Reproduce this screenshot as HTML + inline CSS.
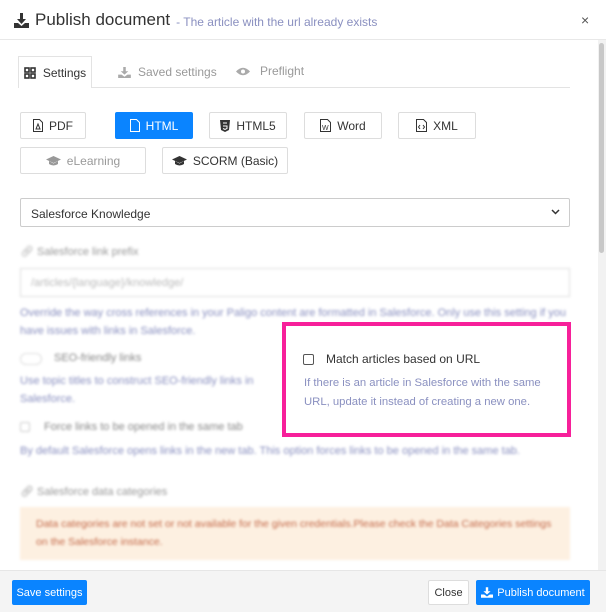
<!DOCTYPE html>
<html><head><meta charset="utf-8"><style>
*{box-sizing:border-box;margin:0;padding:0}
body{width:606px;height:612px;overflow:hidden;background:#fff;font-family:"Liberation Sans",sans-serif;position:relative;color:#333}
.a{position:absolute}
.btn{position:absolute;border:1px solid #ddd;border-radius:2px;background:#fff;font-size:12px;color:#333;display:flex;align-items:center;justify-content:center;gap:6px;height:27px}
.blur{filter:blur(1.3px)}
.desc{color:#8a90c0;font-size:12px;line-height:18px}
</style></head><body>
<div class="a" style="left:14px;top:10px;font-size:17px;color:#333;display:flex;align-items:center;gap:6px">
<svg width="15" height="15" viewBox="0 0 15 15"><path d="M6 0h3v6h3l-4.5 5L3 6h3z M0 10h4l3.5 3 3.5-3h4v5H0z" fill="#333"/></svg>
<span>Publish document</span><span style="font-size:12px;color:#8a90c0;margin-top:3px">- The article with the url already exists</span></div>
<div class="a" style="left:581px;top:12px;font-size:14px;color:#555">×</div>
<div class="a" style="left:0;top:39px;width:606px;height:1px;background:#e8e8e8"></div>
<div class="a" style="left:598px;top:40px;width:8px;height:530px;background:#f2f2f2"></div>
<div class="a" style="left:599px;top:43px;width:5px;height:210px;background:#c8c8c8;border-radius:3px"></div>
<div class="a" style="left:18px;top:87px;width:552px;height:1px;background:#e3e3e3"></div>
<div class="a" style="left:18px;top:56px;width:74px;height:32px;border:1px solid #e3e3e3;border-bottom:none;background:#fff;font-size:12px;display:flex;align-items:center;justify-content:center;gap:7px">
<svg width="12" height="12" viewBox="0 0 12 12" fill="none" stroke="#333" stroke-width="1.6"><rect x="1" y="1" width="4" height="4"/><rect x="7" y="1" width="4" height="4"/><rect x="1" y="7" width="4" height="4"/><rect x="7" y="7" width="4" height="4"/></svg>Settings</div>
<div class="a" style="left:118px;top:65px;font-size:12px;color:#999;display:flex;gap:7px;align-items:center"><svg width="13" height="11" viewBox="0 0 15 13"><path d="M6 0h3v5h3l-4.5 4L3 5h3z M0 9h4l3.5 2.5L11 9h4v4H0z" fill="#aaa"/></svg>Saved settings</div>
<div class="a" style="left:236px;top:64px;font-size:12px;color:#999;display:flex;gap:10px;align-items:center"><svg width="14" height="9" viewBox="0 0 14 9"><path d="M0 4.5Q7-3 14 4.5Q7 12 0 4.5z" fill="#aaa"/><circle cx="7" cy="4.5" r="2" fill="#fff"/></svg>Preflight</div>
<div class="btn" style="left:20px;top:112px;width:66px"><svg width="10" height="13" viewBox="0 0 10 13" fill="none" stroke="#333"><path d="M.5.5h6l3 3v9h-9z M3 10l2-5 2 5z"/></svg>PDF</div>
<div class="btn" style="left:115px;top:112px;width:78px;background:#0a84ff;border-color:#0a84ff;color:#fff"><svg width="10" height="13" viewBox="0 0 10 13" fill="none" stroke="#fff"><path d="M.5.5h6l3 3v9h-9z"/></svg>HTML</div>
<div class="btn" style="left:209px;top:112px;width:78px"><svg width="10" height="12" viewBox="0 0 10 12"><path d="M0 0h10l-1 10-4 2-4-2z" fill="#333"/><path d="M3 3h4M3 6h4v2.5L5 9.5 3 8.5" stroke="#fff" fill="none"/></svg>HTML5</div>
<div class="btn" style="left:304px;top:112px;width:78px"><svg width="11" height="13" viewBox="0 0 11 13" fill="none" stroke="#333"><path d="M.5.5h7l3 3v9h-10z"/><text x="2" y="11" font-size="7" fill="#333" stroke="none" font-family="Liberation Sans">W</text></svg>Word</div>
<div class="btn" style="left:398px;top:112px;width:78px"><svg width="11" height="13" viewBox="0 0 11 13" fill="none" stroke="#333"><path d="M.5.5h7l3 3v9h-10z M4 6l-1.5 2L4 10 M7 6l1.5 2L7 10"/></svg>XML</div>
<div class="btn" style="left:20px;top:147px;width:126px;color:#999"><svg width="15" height="10" viewBox="0 0 15 10"><path d="M0 3.5L7.5 0 15 3.5 7.5 7z M3 5v3q4.5 3 9 0V5L7.5 7.5z" fill="#999"/></svg>eLearning</div>
<div class="btn" style="left:162px;top:147px;width:126px"><svg width="15" height="10" viewBox="0 0 15 10"><path d="M0 3.5L7.5 0 15 3.5 7.5 7z M3 5v3q4.5 3 9 0V5L7.5 7.5z" fill="#333"/></svg>SCORM (Basic)</div>
<div class="a" style="left:20px;top:198px;width:550px;height:29px;border:1px solid #ccc;border-radius:2px;font-size:12px;padding:8px 10px">Salesforce Knowledge</div>
<svg class="a" style="left:551px;top:209px" width="9" height="6" viewBox="0 0 9 6"><path d="M1 1l3.5 3.5L8 1" stroke="#333" stroke-width="1.5" fill="none"/></svg>
<div class="blur">
<div class="a" style="left:20px;top:245px;font-size:11px;color:#aaa">🔗&#xFE0E; <span style="color:#999">Salesforce link prefix</span></div>
<div class="a" style="left:20px;top:268px;width:550px;height:29px;border:1px solid #ddd;font-size:11px;color:#bbb;padding:8px 10px">/articles/{language}/knowledge/</div>
<div class="a desc" style="left:20px;top:304px;width:552px;font-size:11px">Override the way cross references in your Paligo content are formatted in Salesforce. Only use this setting if you have issues with links in Salesforce.</div>
<div class="a" style="left:20px;top:353px;width:22px;height:12px;border:1px solid #ddd;border-radius:6px"></div>
<div class="a" style="left:54px;top:352px;font-size:11px;color:#888">SEO-friendly links</div>
<div class="a desc" style="left:20px;top:372px;width:240px;font-size:11px">Use topic titles to construct SEO-friendly links in Salesforce.</div>
<div class="a" style="left:20px;top:422px;width:10px;height:10px;border:1px solid #ccc;border-radius:2px"></div>
<div class="a" style="left:44px;top:421px;font-size:11px;color:#888">Force links to be opened in the same tab</div>
<div class="a desc" style="left:20px;top:442px;width:560px;font-size:11px">By default Salesforce opens links in the new tab. This option forces links to be opened in the same tab.</div>
<div class="a" style="left:20px;top:485px;font-size:11px;color:#999">🔗&#xFE0E; Salesforce data categories</div>
<div class="a" style="left:20px;top:507px;width:550px;height:53px;background:#fdf0e1;padding:8px 16px;font-size:10.5px;line-height:18px;color:#c46a4a">Data categories are not set or not available for the given credentials.Please check the Data Categories settings on the Salesforce instance.</div>
</div>
<div class="a" style="left:282px;top:322px;width:289px;height:115px;border:4px solid #f7209a;background:#fff"></div>
<div class="a" style="left:303px;top:354px;width:11px;height:11px;border:1px solid #555;border-radius:2px"></div>
<div class="a" style="left:326px;top:352px;font-size:12px;color:#333">Match articles based on URL</div>
<div class="a desc" style="left:304px;top:374px;width:262px;line-height:19px;font-size:11.3px">If there is an article in Salesforce with the same URL, update it instead of creating a new one.</div>
<div class="a" style="left:0;top:570px;width:606px;height:42px;background:#f4f4f4;border-top:1px solid #e6e6e6"></div>
<div class="btn" style="left:12px;top:580px;width:75px;height:25px;background:#0a84ff;border-color:#0a84ff;color:#fff;font-size:11px">Save settings</div>
<div class="btn" style="left:428px;top:580px;width:41px;height:25px;font-size:11px">Close</div>
<div class="btn" style="left:476px;top:580px;width:114px;height:25px;background:#0a84ff;border-color:#0a84ff;color:#fff;font-size:11px;gap:4px"><svg width="12" height="11" viewBox="0 0 15 13"><path d="M6 0h3v5h3l-4.5 4L3 5h3z M0 9h4l3.5 2.5L11 9h4v4H0z" fill="#fff"/></svg>Publish document</div>
</body></html>
